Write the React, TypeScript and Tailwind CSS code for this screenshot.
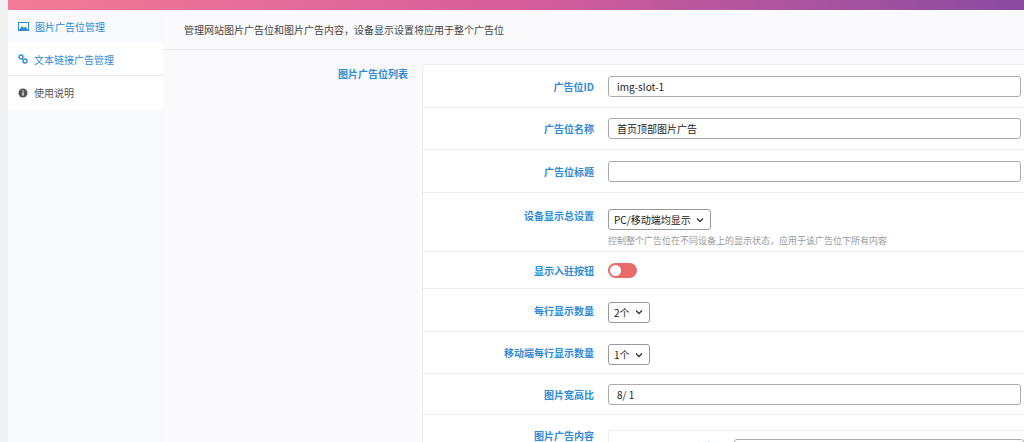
import React from "react";

const Chev = () => (
  <svg width="10" height="10" viewBox="0 0 10 10" className="ml-1"><path d="M2 3.5l3 3 3-3" fill="none" stroke="#333" strokeWidth="1.3" /></svg>
);

function Row({ label, children, h }: { label: string; children: React.ReactNode; h: string }) {
  return (
    <div className={`flex border-b border-[#eceef1] ${h} items-center`}>
      <div className="w-[185px] pr-[14px] text-right text-[10px] font-bold text-[#2f8bd6]">{label}</div>
      <div className="flex-1 pr-[3px]">{children}</div>
    </div>
  );
}

const Input = ({ v }: { v: string }) => (
  <div className="h-[21px] border border-[#aaa] rounded-[3px] px-2 flex items-center text-[10px] text-[#222] bg-white">{v}</div>
);
const Sel = ({ v }: { v: string }) => (
  <div className="inline-flex h-[21px] border border-[#999] rounded-[3px] px-[5px] items-center text-[10px] text-[#222] bg-white">{v}<Chev /></div>
);

export default function App() {
  return (
    <div className="w-[1024px] h-[442px] overflow-hidden flex bg-[#f0f0f1]" style={{ fontFamily: '"Noto Sans CJK SC", "Noto Sans", sans-serif' }}>
      <div className="w-[8px]" />
      <div className="flex-1 flex flex-col">
        <div className="h-[10px] shrink-0 bg-linear-to-r from-[#f47b96] via-[#d65e9a] to-[#8a4aa0]" />
        <div className="flex flex-1 bg-white">
          <div className="w-[155px] bg-[#f8f9fa] text-[10px] text-[#555]">
            <div className="h-[33px] flex items-center px-[10px] gap-[6px] text-[#2f8bd6] bg-[#f8f9fc]">
              <svg width="11" height="9" viewBox="0 0 11 9"><rect x="0.5" y="0.5" width="10" height="8" fill="none" stroke="#2f8bd6" /><path d="M1 8l3-4 2 2 1.5-1.5L10 8z" fill="#2f8bd6" /></svg>
              图片广告位管理
            </div>
            <div className="h-[33px] flex items-center px-[10px] gap-[6px] text-[#2f8bd6] border-b border-[#e6e8eb] bg-white">
              <svg width="10" height="10" viewBox="0 0 10 10" fill="none" stroke="#2f8bd6" strokeWidth="1.4"><circle cx="3" cy="3" r="2" /><circle cx="7" cy="7" r="2" /></svg>
              文本链接广告管理
            </div>
            <div className="h-[33px] flex items-center px-[10px] gap-[6px] bg-white">
              <svg width="10" height="10" viewBox="0 0 10 10"><circle cx="5" cy="5" r="4.5" fill="#555" /><rect x="4.4" y="4.2" width="1.2" height="3.5" fill="#fff" /><rect x="4.4" y="2.3" width="1.2" height="1.2" fill="#fff" /></svg>
              使用说明
            </div>
          </div>
          <div className="flex-1 flex flex-col bg-[#fafafc]">
            <div className="h-[40px] shrink-0 flex items-center pl-[21px] text-[10px] text-[#444] border-b border-[#e8e9ee]">管理网站图片广告位和图片广告内容，设备显示设置将应用于整个广告位</div>
            <div className="flex flex-1 pt-[14px]">
              <div className="w-[259px] pr-[14px] text-right text-[10px] font-bold text-[#2f8bd6] pt-[2px]">图片广告位列表</div>
              <div className="flex-1 bg-white border-l border-t border-[#eceef1] rounded-tl-[3px]">
                <Row label="广告位ID" h="h-[43px]"><Input v="img-slot-1" /></Row>
                <Row label="广告位名称" h="h-[42px]"><Input v="首页顶部图片广告" /></Row>
                <Row label="广告位标题" h="h-[43px]"><Input v="" /></Row>
                <div className="flex items-start border-b border-[#eceef1] h-[59px] pt-[12px]">
                  <div className="w-[185px] pr-[14px] text-right text-[10px] font-bold text-[#2f8bd6] pt-[3px]">设备显示总设置</div>
                  <div className="flex-1">
                    <Sel v="PC/移动端均显示" />
                    <div className="text-[9px] text-[#999] mt-[4px]">控制整个广告位在不同设备上的显示状态，应用于该广告位下所有内容</div>
                  </div>
                </div>
                <Row label="显示入驻按钮" h="h-[37px]">
                  <div className="w-[29px] h-[15px] rounded-full bg-[#e86a6a] flex items-center pl-[2px]"><div className="w-[11px] h-[11px] rounded-full bg-white" /></div>
                </Row>
                <Row label="每行显示数量" h="h-[43px]"><Sel v="2个" /></Row>
                <Row label="移动端每行显示数量" h="h-[42px]"><Sel v="1个" /></Row>
                <Row label="图片宽高比" h="h-[41px]"><Input v="8/ 1" /></Row>
                <div className="flex pt-[13px]">
                  <div className="w-[185px] pr-[14px] text-right text-[10px] font-bold text-[#2f8bd6]">图片广告内容</div>
                  <div className="flex-1 border-l border-t border-[#eceef1] mt-[2px] h-[40px] flex pt-[8px]">
                    <div className="w-[125px] text-right pr-[10px] text-[10px] font-bold text-[#2f8bd6]">广告ID</div>
                    <div className="flex-1 h-[21px] border border-[#aaa] rounded-[3px]" />
                  </div>
                </div>
              </div>
            </div>
          </div>
        </div>
      </div>
    </div>
  );
}
